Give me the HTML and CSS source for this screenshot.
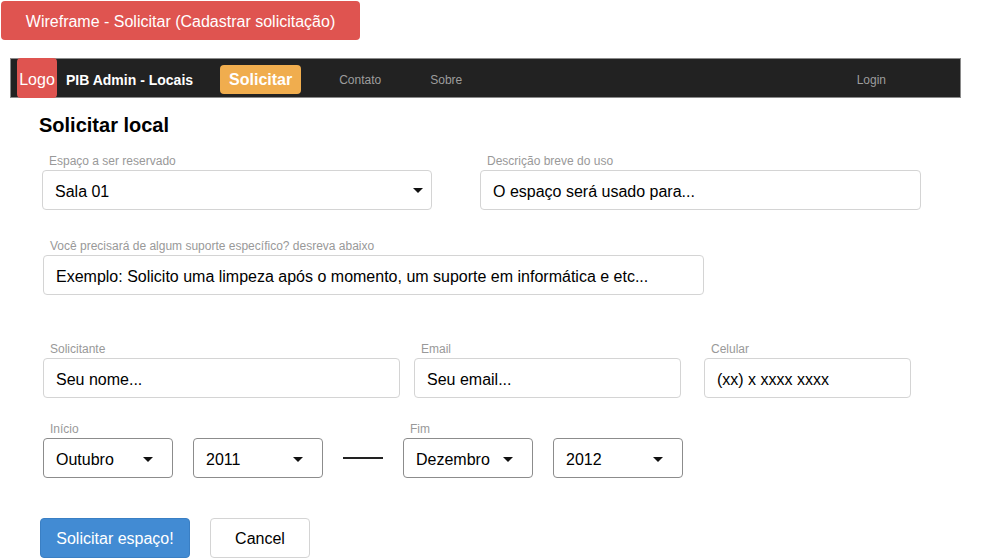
FILE: index.html
```html
<!DOCTYPE html>
<html lang="pt">
<head>
<meta charset="utf-8">
<title>Wireframe - Solicitar</title>
<link rel="stylesheet" href="styles.css">
</head>
<body>
<div class="banner">Wireframe - Solicitar (Cadastrar solicitação)</div>

<nav class="navbar">
  <div class="logo">Logo</div>
  <div class="brand">PIB Admin - Locais</div>
  <div class="nav-active">Solicitar</div>
  <div class="nav-link nav-contato">Contato</div>
  <div class="nav-link nav-sobre">Sobre</div>
  <div class="nav-link nav-login">Login</div>
</nav>

<main class="form">
  <h1 class="title">Solicitar local</h1>

  <div class="row row1">
    <div class="field f-espaco">
      <div class="label">Espaço a ser reservado</div>
      <div class="box select-big">Sala 01<span class="caret caret-big"></span></div>
    </div>
    <div class="field f-desc">
      <div class="label">Descrição breve do uso</div>
      <div class="box">O espaço será usado para...</div>
    </div>
  </div>

  <div class="row row2">
    <div class="field f-suporte">
      <div class="label">Você precisará de algum suporte específico? desreva abaixo</div>
      <div class="box">Exemplo: Solicito uma limpeza após o momento, um suporte em informática e etc...</div>
    </div>
  </div>

  <div class="row row3">
    <div class="field f-nome">
      <div class="label">Solicitante</div>
      <div class="box">Seu nome...</div>
    </div>
    <div class="field f-email">
      <div class="label">Email</div>
      <div class="box">Seu email...</div>
    </div>
    <div class="field f-cel">
      <div class="label">Celular</div>
      <div class="box">(xx) x xxxx xxxx</div>
    </div>
  </div>

  <div class="row row4">
    <div class="field">
      <div class="label">Início</div>
      <div class="pair">
        <div class="box select-small">Outubro<span class="caret"></span></div>
        <div class="box select-small">2011<span class="caret"></span></div>
      </div>
    </div>
    <div class="dash"></div>
    <div class="field">
      <div class="label">Fim</div>
      <div class="pair">
        <div class="box select-small">Dezembro<span class="caret"></span></div>
        <div class="box select-small">2012<span class="caret"></span></div>
      </div>
    </div>
  </div>

  <div class="row actions">
    <div class="btn btn-primary">Solicitar espaço!</div>
    <div class="btn btn-default">Cancel</div>
  </div>
</main>
</body>
</html>
```

FILE: styles.css
```css
* { box-sizing: border-box; }

body {
  margin: 0;
  width: 1008px;
  height: 559px;
  overflow: hidden;
  background: #ffffff;
  font-family: "Liberation Sans", Arial, sans-serif;
  color: #000;
}

.banner {
  margin: 1px 0 0 1px;
  width: 359px;
  height: 39px;
  padding-top: 3px;
  background: #df5450;
  border-radius: 4px;
  color: #fff;
  font-size: 16px;
  display: flex;
  align-items: center;
  justify-content: center;
}

.navbar {
  margin: 18px 0 0 10px;
  width: 951px;
  height: 40px;
  background: #222222;
  border: 1px solid #8a8a8a;
  display: flex;
  align-items: center;
  position: relative;
}

.logo {
  margin-left: 6px;
  width: 40px;
  height: 40px;
  padding-top: 3px;
  background: #df5450;
  border-radius: 4px;
  color: #fff;
  font-size: 16px;
  display: flex;
  align-items: center;
  justify-content: center;
}

.brand {
  margin-left: 9px;
  padding-top: 3px;
  color: #fff;
  font-weight: bold;
  font-size: 14px;
}

.nav-active {
  margin-left: 27px;
  margin-top: 2px;
  height: 29px;
  padding: 2px 9px 0 9px;
  background: #f0ad4e;
  border-radius: 4px;
  color: #fff;
  font-weight: bold;
  font-size: 16px;
  display: flex;
  align-items: center;
}

.nav-link {
  padding-top: 3px;
  color: #9d9d9d;
  font-size: 12px;
}
.nav-contato { margin-left: 38px; }
.nav-sobre { margin-left: 49px; }
.nav-login { margin-left: auto; margin-right: 74px; }

.title {
  margin: 15px 0 0 39px;
  font-size: 20px;
  line-height: 24px;
  font-weight: bold;
}

.row {
  display: flex;
  align-items: flex-end;
}

.field {
  display: flex;
  flex-direction: column;
}

.label {
  padding-left: 7px;
  height: 16px;
  line-height: 14px;
  font-size: 12px;
  color: #999;
  white-space: nowrap;
}

.box {
  height: 40px;
  border: 1px solid #d4d4d4;
  border-radius: 4px;
  padding: 3px 12px 0 12px;
  font-size: 16px;
  white-space: nowrap;
  display: flex;
  align-items: center;
  position: relative;
  background: #fff;
}

.row1 { margin-top: 17px; }
.f-espaco { margin-left: 42px; width: 390px; }
.f-desc { margin-left: 48px; width: 441px; }

.row2 { margin-top: 29px; }
.f-suporte { margin-left: 43px; width: 661px; }

.row3 { margin-top: 47px; }
.f-nome { margin-left: 43px; width: 357px; }
.f-email { margin-left: 14px; width: 267px; }
.f-cel { margin-left: 23px; width: 207px; }

.row4 { margin-top: 24px; margin-left: 43px; }
.pair {
  display: flex;
  gap: 20px;
}
.select-small {
  width: 130px;
  border-color: #8c8c8c;
}
.dash {
  width: 40px;
  height: 2px;
  background: #222;
  margin: 0 20px 19px 20px;
}

.caret {
  position: absolute;
  right: 19px;
  top: 18px;
  width: 0;
  height: 0;
  border-left: 5px solid transparent;
  border-right: 5px solid transparent;
  border-top: 5px solid #111;
}
.caret-big {
  right: 8px;
  top: 17px;
}

.actions {
  margin-top: 40px;
  margin-left: 40px;
  gap: 20px;
}

.btn {
  height: 40px;
  padding-top: 2px;
  border-radius: 4px;
  font-size: 16px;
  display: flex;
  align-items: center;
  justify-content: center;
}
.btn-primary {
  width: 150px;
  background: #428bd3;
  border: 1px solid #3a7fc4;
  color: #fff;
}
.btn-default {
  width: 100px;
  background: #fff;
  border: 1px solid #d4d4d4;
  color: #000;
}
```
